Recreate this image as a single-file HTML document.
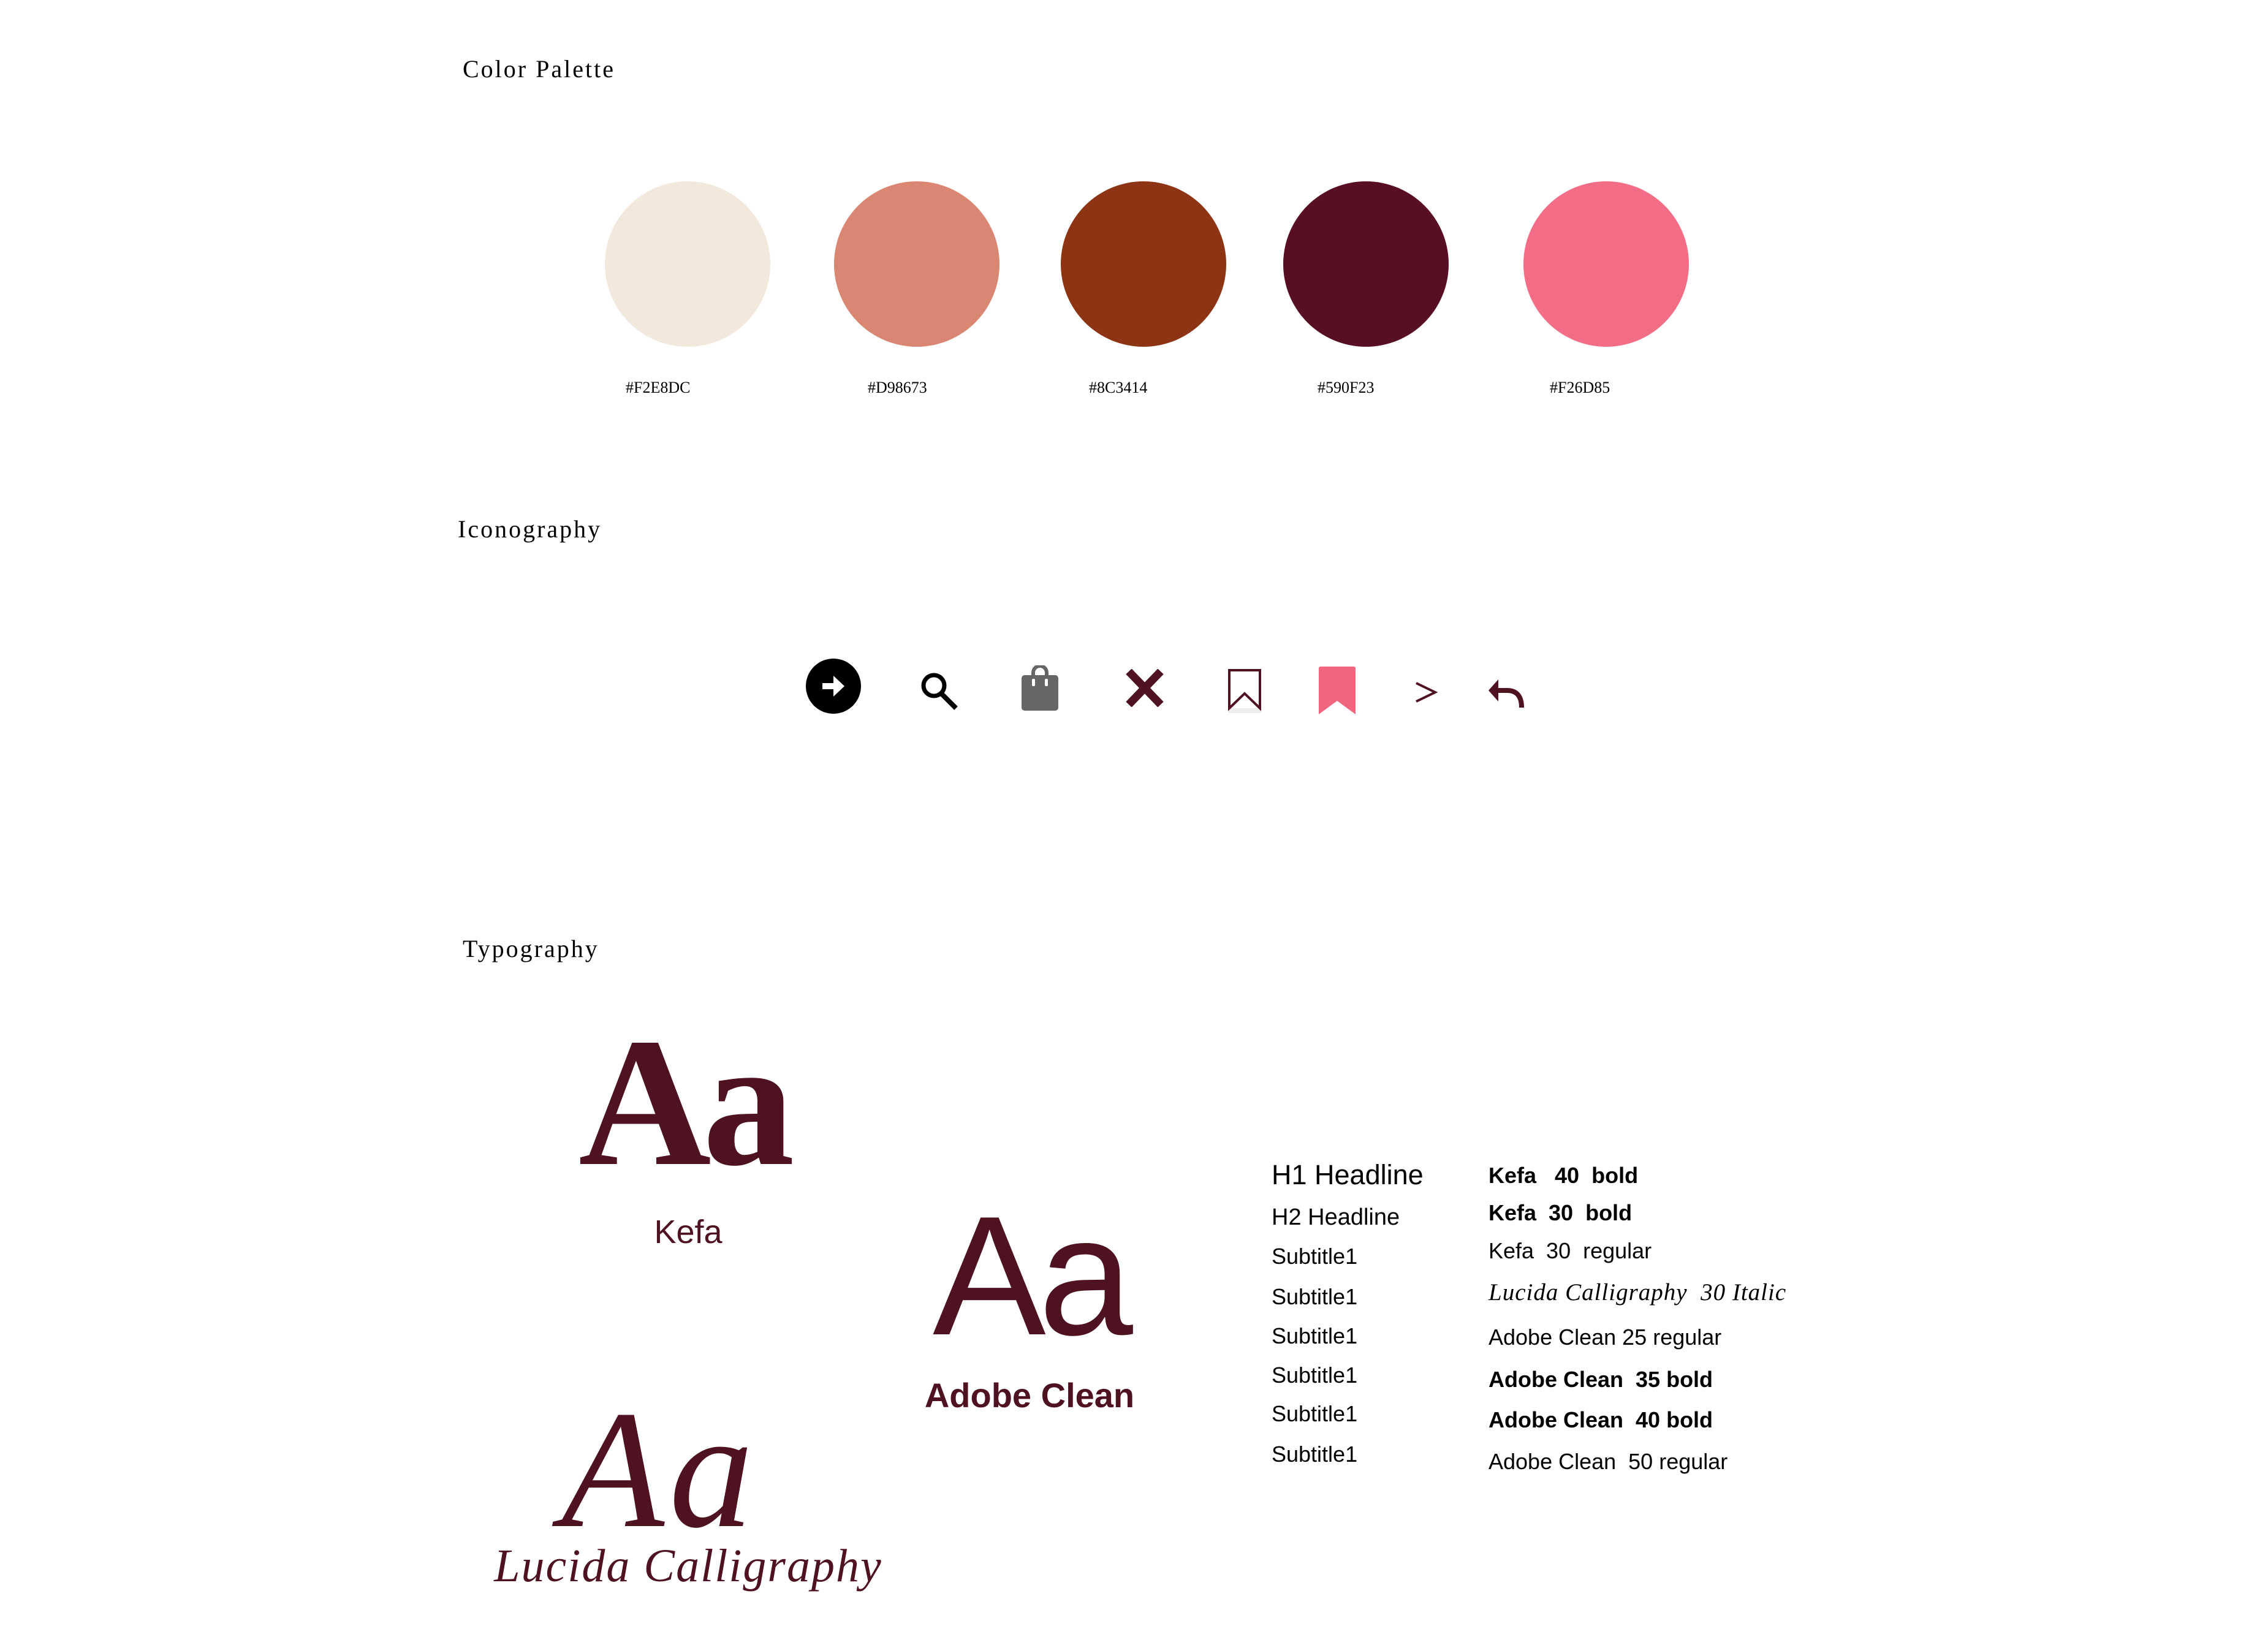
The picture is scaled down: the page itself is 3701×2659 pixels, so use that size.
<!DOCTYPE html>
<html><head><meta charset="utf-8"><style>
html,body{margin:0;padding:0;background:#fff;}
body{width:3701px;height:2659px;position:relative;overflow:hidden;font-family:"Liberation Sans",sans-serif;color:#000;}
.t{position:absolute;white-space:nowrap;line-height:1;}
.h{font-family:"Liberation Serif",serif;font-size:40px;letter-spacing:3px;}
.c{position:absolute;width:270px;height:270px;border-radius:50%;top:296px;}
.hex{font-family:"Liberation Serif",serif;font-size:26px;top:620px;}
.m{color:#4e1220;}
.l{font-size:36px;left:2075px;}
.r{font-size:36px;left:2429px;}
svg{position:absolute;}
</style></head><body>
<div class="t h" style="left:755px;top:93px;">Color Palette</div>
<div class="c" style="left:987px;background:#F2E8DC"></div>
<div class="c" style="left:1361px;background:#D98673"></div>
<div class="c" style="left:1731px;background:#8C3414"></div>
<div class="c" style="left:2094px;background:#590F23"></div>
<div class="c" style="left:2486px;background:#F26D85"></div>
<div class="t hex" style="left:1021px;">#F2E8DC</div>
<div class="t hex" style="left:1416px;">#D98673</div>
<div class="t hex" style="left:1777px;">#8C3414</div>
<div class="t hex" style="left:2150px;">#590F23</div>
<div class="t hex" style="left:2529px;">#F26D85</div>

<div class="t h" style="left:747px;top:844px;">Iconography</div>

<svg style="left:1315px;top:1075px" width="90" height="90" viewBox="0 0 90 90"><circle cx="45" cy="45" r="45" fill="#000"/><path d="M27 40h18v-12l18 17-18 17v-12h-18z" fill="#fff"/></svg>
<svg style="left:1500px;top:1095px" width="64" height="64" viewBox="0 0 64 64"><circle cx="24" cy="24" r="17" fill="none" stroke="#000" stroke-width="7"/><path d="M36 37l24 24" stroke="#000" stroke-width="8"/></svg>
<svg style="left:1667px;top:1086px" width="60" height="74" viewBox="0 0 60 74"><path d="M19 20v-8a11 11 0 0 1 22 0v8" fill="none" stroke="#666" stroke-width="6"/><rect x="0" y="16" width="60" height="58" rx="5" fill="#666"/><rect x="17" y="22" width="5" height="12" rx="2" fill="#fff"/><rect x="38" y="22" width="5" height="12" rx="2" fill="#fff"/></svg>
<svg style="left:1836px;top:1092px" width="64" height="62" viewBox="0 0 64 62"><path d="M6 4L58 58M58 4L6 58" stroke="#4e1220" stroke-width="13"/></svg>
<svg style="left:2002px;top:1090px" width="58" height="76" viewBox="0 0 58 76"><rect x="2" y="66" width="54" height="8" fill="#eee"/><path d="M4 4h50v62L29 42 4 66z" fill="#fff" stroke="#4e1220" stroke-width="4"/></svg>
<svg style="left:2152px;top:1088px" width="60" height="78" viewBox="0 0 60 78"><path d="M0 3q0-3 3-3h54q3 0 3 3v75L30 56 0 78z" fill="#F0667F"/></svg>
<svg style="left:2308px;top:1112px" width="38" height="36" viewBox="0 0 38 36"><path d="M3 3l31 15L3 33" fill="none" stroke="#4e1220" stroke-width="4"/></svg>
<svg style="left:2427px;top:1107px" width="64" height="50" viewBox="0 0 64 50"><path d="M2 20L18 2v36z" fill="#4e1220"/><path d="M14 20h18q24 0 24 28" fill="none" stroke="#4e1220" stroke-width="8"/></svg>

<div class="t h" style="left:755px;top:1529px;">Typography</div>

<div class="t m" style="left:944px;top:1649px;font-family:'Liberation Serif',serif;font-weight:bold;font-size:300px;letter-spacing:-14px;">Aa</div>
<div class="t m" style="left:1060px;top:1984px;font-size:54px;width:126px;text-align:center;">Kefa</div>
<div class="t m" style="left:1522px;top:1944px;font-size:277px;letter-spacing:-12px;">Aa</div>
<div class="t m" style="left:1480px;top:2250px;font-size:56px;font-weight:bold;width:400px;text-align:center;">Adobe Clean</div>
<div class="t m" style="left:916px;top:2262px;font-family:'Liberation Serif',serif;font-style:italic;font-size:275px;letter-spacing:8px;">Aa</div>
<div class="t m" style="left:700px;top:2518px;font-family:'Liberation Serif',serif;font-style:italic;font-size:76px;letter-spacing:2px;width:846px;text-align:center;">Lucida Calligraphy</div>

<div class="t l" style="top:1895px;font-size:45px;">H1 Headline</div>
<div class="t l" style="top:1968px;font-size:38px;">H2 Headline</div>
<div class="t l" style="top:2033px;">Subtitle1</div>
<div class="t l" style="top:2099px;">Subtitle1</div>
<div class="t l" style="top:2163px;">Subtitle1</div>
<div class="t l" style="top:2227px;">Subtitle1</div>
<div class="t l" style="top:2290px;">Subtitle1</div>
<div class="t l" style="top:2356px;">Subtitle1</div>

<div class="t r" style="top:1901px;font-weight:bold;">Kefa&nbsp;&nbsp; 40&nbsp; bold</div>
<div class="t r" style="top:1962px;font-weight:bold;">Kefa&nbsp; 30&nbsp; bold</div>
<div class="t r" style="top:2024px;">Kefa&nbsp; 30&nbsp; regular</div>
<div class="t r" style="top:2090px;font-family:'Liberation Serif',serif;font-style:italic;font-size:39px;letter-spacing:1px;">Lucida Calligraphy&nbsp; 30 Italic</div>
<div class="t r" style="top:2165px;">Adobe Clean 25 regular</div>
<div class="t r" style="top:2234px;font-weight:bold;">Adobe Clean&nbsp; 35 bold</div>
<div class="t r" style="top:2300px;font-weight:bold;">Adobe Clean&nbsp; 40 bold</div>
<div class="t r" style="top:2368px;">Adobe Clean&nbsp; 50 regular</div>
</body></html>
